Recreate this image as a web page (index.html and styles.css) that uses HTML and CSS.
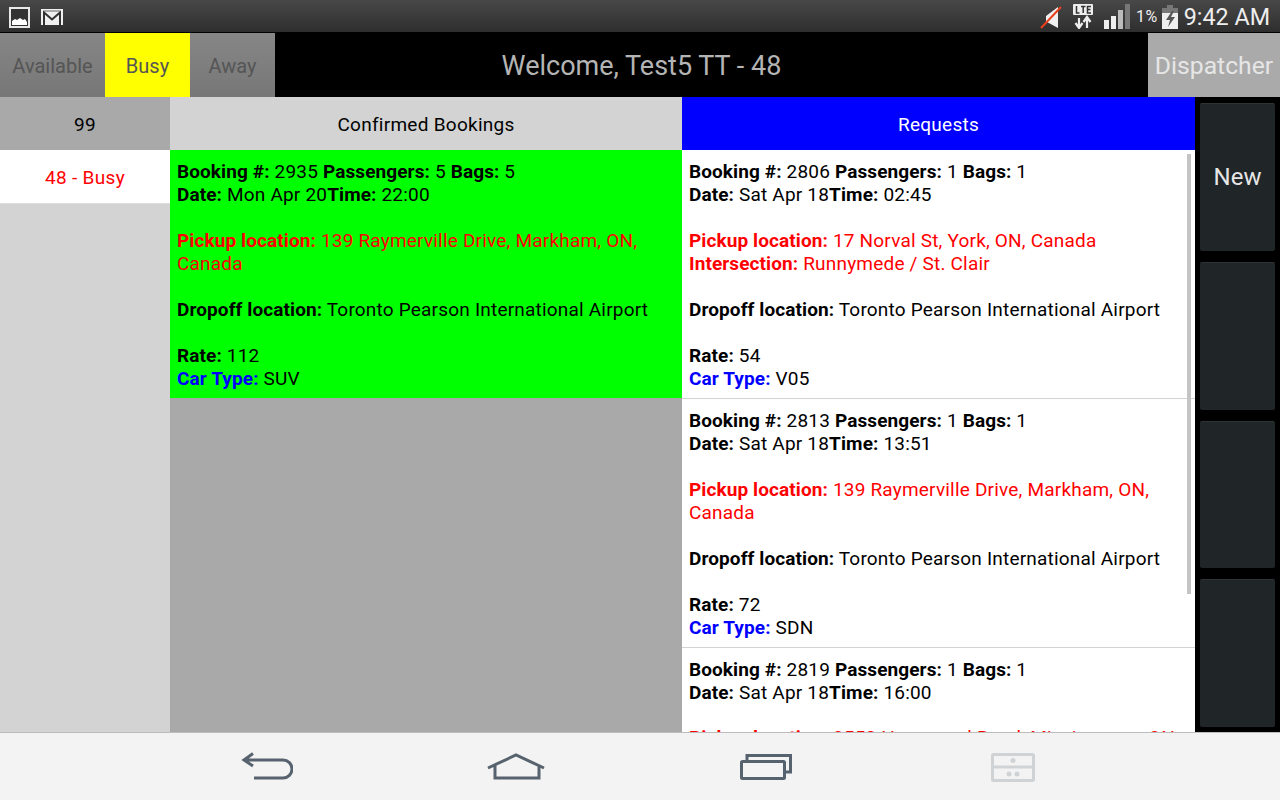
FILE: index.html
```html
<!DOCTYPE html>
<html lang="en">
<head>
<meta charset="utf-8">
<title>Dispatcher</title>
<link rel="stylesheet" href="styles.css">
</head>
<body>
<div class="screen">
  <div class="status">
    <div class="status-left">
      <svg class="ic-pic" width="21" height="21" viewBox="0 0 21 21"><rect x="1" y="1" width="19" height="19" fill="#333" stroke="#e8e8e8" stroke-width="2"/><path d="M3 18v-4l3-2 2 1 3-2 3 2 2-1 2 3v3z" fill="#fff"/></svg>
      <svg class="ic-mail" width="22" height="16" viewBox="0 0 22 16"><rect width="22" height="16" fill="#f0f0f0"/><path d="M3 16V3.500l8 7 8-7V16" fill="none" stroke="#333" stroke-width="2"/><path d="M3 2h16" stroke="#666" stroke-width="1"/></svg>
    </div>
    <div class="status-right">
      <svg class="ic-mute" width="22" height="24" viewBox="0 0 22 24"><path d="M6 11l12-9v21l-11-6H6z" fill="#f0f0f0"/><path d="M1 23L21 2" stroke="#e8401c" stroke-width="2"/></svg>
      <svg class="ic-lte" width="20" height="25" viewBox="0 0 20 25"><rect width="20" height="11" rx="1" fill="#eee"/><path d="M3.500 2v7h3M8 2.500h4.500M10.200 2.500v6.500M18 2.500h-3.500v6.500h3.500M14.500 5.500h3" fill="none" stroke="#333" stroke-width="1.500"/><path d="M6 14v9M2.500 19l3.500 5 3.500-5M14 24v-9M10.500 18l3.500-5 3.500 5" fill="none" stroke="#eee" stroke-width="2.200"/></svg>
      <svg class="ic-sig" width="26" height="25" viewBox="0 0 26 25"><rect x="0" y="16" width="5" height="9" fill="#eee"/><rect x="7" y="12" width="5" height="13" fill="#eee"/><rect x="14" y="6" width="5" height="19" fill="#bbb"/><rect x="21" y="0" width="5" height="25" fill="#777"/></svg>
      <span class="pct">1%</span>
      <svg class="ic-bat" width="16" height="24" viewBox="0 0 16 24"><rect x="5" y="0" width="6" height="3" fill="#777"/><rect y="3" width="16" height="5" fill="#777"/><rect y="8" width="16" height="16" fill="#eee"/><path d="M10 6l-6 9h4l-2 7 7-10H9l3-6z" fill="#555"/></svg>
      <span class="clock">9:42 AM</span>
    </div>
  </div>
  <div class="topbar">
    <div class="tab">Available</div>
    <div class="tab tab-on">Busy</div>
    <div class="tab">Away</div>
    <div class="welcome">Welcome, Test5 TT - 48</div>
    <div class="dispatcher">Dispatcher</div>
  </div>
  <div class="main">
    <div class="drivers">
      <div class="drivers-head">99</div>
      <div class="driver">48 - Busy</div>
    </div>
    <div class="confirmed">
      <div class="col-head">Confirmed Bookings</div>
      <div class="booking booking-on">
        <b>Booking #:</b> 2935 <b>Passengers:</b> 5 <b>Bags:</b> 5<br>
        <b>Date:</b> Mon Apr 20<b>Time:</b> 22:00<br><br>
        <span class="red"><b>Pickup location:</b> 139 Raymerville Drive, Markham, ON, Canada</span><br><br>
        <b>Dropoff location:</b> Toronto Pearson International Airport<br><br>
        <b>Rate:</b> 112<br>
        <b class="blue">Car Type:</b> SUV
      </div>
    </div>
    <div class="requests">
      <div class="col-head col-head-blue">Requests</div>
      <div class="list">
        <div class="booking">
          <b>Booking #:</b> 2806 <b>Passengers:</b> 1 <b>Bags:</b> 1<br>
          <b>Date:</b> Sat Apr 18<b>Time:</b> 02:45<br><br>
          <span class="red"><b>Pickup location:</b> 17 Norval St, York, ON, Canada<br>
          <b>Intersection:</b> Runnymede / St. Clair</span><br><br>
          <b>Dropoff location:</b> Toronto Pearson International Airport<br><br>
          <b>Rate:</b> 54<br>
          <b class="blue">Car Type:</b> V05
        </div>
        <div class="booking">
          <b>Booking #:</b> 2813 <b>Passengers:</b> 1 <b>Bags:</b> 1<br>
          <b>Date:</b> Sat Apr 18<b>Time:</b> 13:51<br><br>
          <span class="red"><b>Pickup location:</b> 139 Raymerville Drive, Markham, ON, Canada</span><br><br>
          <b>Dropoff location:</b> Toronto Pearson International Airport<br><br>
          <b>Rate:</b> 72<br>
          <b class="blue">Car Type:</b> SDN
        </div>
        <div class="booking">
          <b>Booking #:</b> 2819 <b>Passengers:</b> 1 <b>Bags:</b> 1<br>
          <b>Date:</b> Sat Apr 18<b>Time:</b> 16:00
          <div class="red cut"><b>Pickup location:</b> 3550 Hammond Road, Mississauga, ON</div>
        </div>
      </div>
      <div class="scrollbar"></div>
    </div>
    <div class="actions">
      <div class="action">New</div>
      <div class="action"></div>
      <div class="action"></div>
      <div class="action"></div>
    </div>
  </div>
  <div class="nav">
    <svg class="nav-ic" width="52" height="30" viewBox="0 0 52 30"><path d="M12 1.500L3 8l9 6M3 8h39a9 9 0 0 1 0 18H13" fill="none" stroke="#56626d" stroke-width="3"/></svg>
    <svg class="nav-ic" width="58" height="28" viewBox="0 0 58 28"><path d="M1 15L29 2l28 13M8 12v13h44V12" fill="none" stroke="#56626d" stroke-width="3"/></svg>
    <svg class="nav-ic" width="52" height="26" viewBox="0 0 52 26"><path d="M7 7V1.500h43.500V18H45" fill="none" stroke="#56626d" stroke-width="3"/><rect x="1.500" y="7.500" width="43" height="17" rx="1" fill="none" stroke="#56626d" stroke-width="3"/></svg>
    <svg class="nav-ic" width="44" height="29" viewBox="0 0 44 29"><rect x="1.500" y="1.500" width="41" height="26" rx="1" fill="none" stroke="#d0d3d6" stroke-width="3"/><path d="M2 14h40" stroke="#d0d3d6" stroke-width="3"/><circle cx="22" cy="7.500" r="2.500" fill="#d0d3d6"/><circle cx="18" cy="21" r="2.500" fill="#d0d3d6"/><circle cx="26" cy="21" r="2.500" fill="#d0d3d6"/></svg>
  </div>
</div>
</body>
</html>
```
FILE: styles.css
```css
* { box-sizing: border-box; }
html, body { margin: 0; padding: 0; }
body { font-family: Roboto, "Noto Sans", sans-serif; background: #000; }
.screen { width: 1280px; height: 800px; display: flex; flex-direction: column; overflow: hidden; }

.status { height: 33px; flex: none; display: flex; justify-content: space-between; align-items: center; background: linear-gradient(#484848, #2e2e2e); border-bottom: 1px solid #000; color: #eee; }
.status-left { display: flex; align-items: center; gap: 11px; padding: 2px 0 0 9px; }
.status-right { display: flex; align-items: center; padding: 1px 10px 0 0; }
.ic-mute { margin-right: 11px; }
.ic-lte { margin-right: 11px; }
.ic-sig { margin-right: 6px; }
.pct { font-size: 16px; margin-right: 4px; letter-spacing: .5px; }
.ic-bat { margin-right: 6px; }
.clock { font-size: 23.300px; }

.topbar { height: 64px; flex: none; display: flex; background: #000; }
.tab { width: 85px; display: flex; align-items: center; justify-content: center; padding-top: 1px; font-size: 20px; color: #555; background: linear-gradient(#868686, #777); }
.tab:first-child { width: 105px; }
.tab-on { background: #ff0; }
.welcome { flex: 1; display: flex; align-items: center; justify-content: center; padding: 1px 140px 0 0; font-size: 27px; color: #b4b4b4; }
.dispatcher { width: 132px; display: flex; align-items: center; justify-content: center; padding-top: 1px; font-size: 24.700px; color: #e6e6e6; background: #aaa; }

.main { height: 635px; flex: none; display: flex; background: #000; }
.drivers { width: 170px; flex: none; background: #d3d3d3; }
.drivers-head { height: 53px; display: flex; align-items: center; justify-content: center; padding-top: 2px; font-size: 19px; letter-spacing: .25px; color: #000; background: #a9a9a9; }
.driver { height: 54px; display: flex; align-items: center; justify-content: center; padding-top: 2px; font-size: 19px; letter-spacing: .3px; color: #f00; background: #fff; border-bottom: 1px solid #ddd; }
.confirmed { width: 512px; flex: none; background: #a9a9a9; }
.col-head { height: 53px; display: flex; align-items: center; justify-content: center; padding-top: 2px; font-size: 19px; letter-spacing: .27px; color: #000; background: #d3d3d3; }
.col-head-blue { background: #00f; color: #fff; }
.requests { width: 513px; flex: none; position: relative; overflow: hidden; background: #fff; }
.list { background: #fff; }
.booking { height: 249px; padding: 10px 20px 0 7px; font-size: 19px; line-height: 23px; letter-spacing: .2px; color: #000; background: #fff; border-bottom: 1px solid #d3d3d3; }
.booking b { font-weight: 700; letter-spacing: .1px; }
.booking-on { height: 248px; background: #0f0; border-bottom: 0; }
.cut { margin-top: 22px; white-space: nowrap; }
.red { color: #f00; }
.blue { color: #00f; }
.scrollbar { position: absolute; left: 505px; top: 57px; width: 4px; height: 440px; background: #c4c4c4; }
.actions { flex: 1; display: flex; flex-direction: column; gap: 11px; padding: 6px 5px 5px 5px; }
.action { flex: 1; display: flex; align-items: center; justify-content: center; font-size: 24px; color: #e6e6e6; background: #202528; border-top: 1px solid #2e3336; border-radius: 2px; }

.nav { height: 68px; flex: none; display: flex; align-items: center; background: #f3f3f3; border-top: 1px solid #bcbcbc; padding: 1px 0 0 241px; }
.nav-ic { flex: none; }
.nav-ic:nth-child(1) { margin-right: 194px; }
.nav-ic:nth-child(2) { margin-right: 195px; }
.nav-ic:nth-child(3) { margin-right: 199px; }
```
